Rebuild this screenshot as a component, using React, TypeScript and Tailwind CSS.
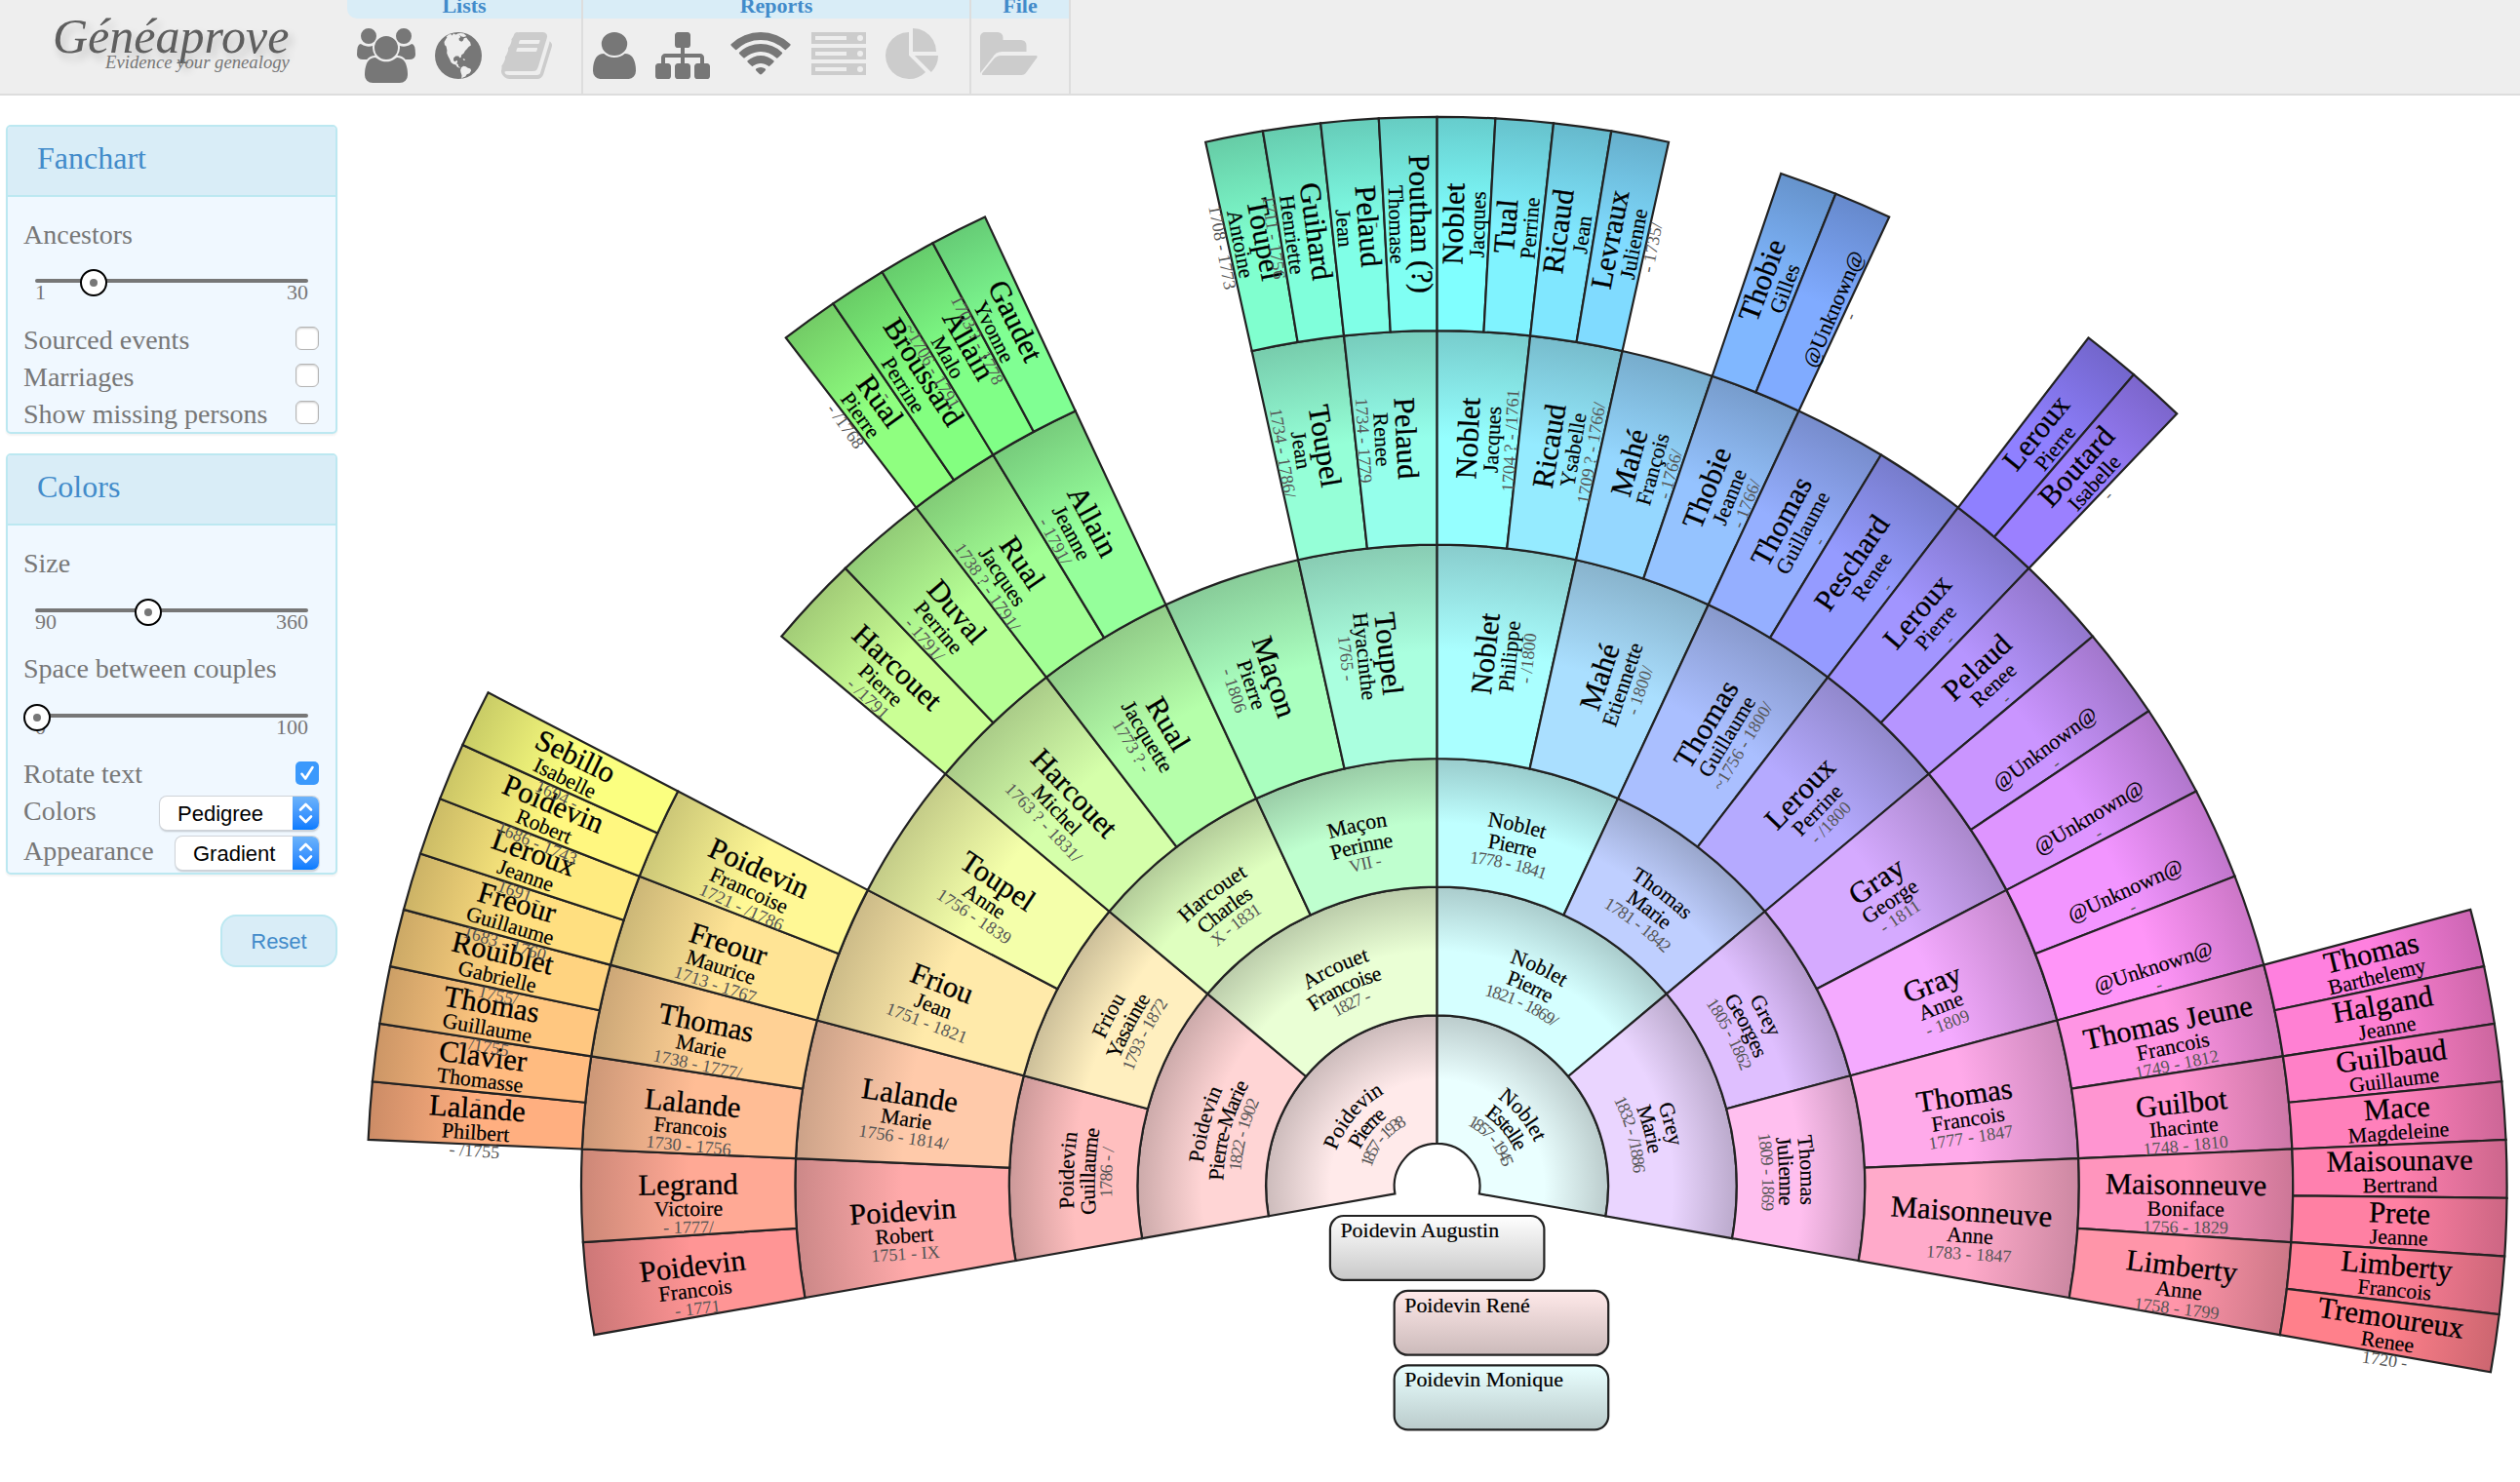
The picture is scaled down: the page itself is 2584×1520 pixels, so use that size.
import React from "react";

/* ------------------------------------------------------------------ */
/* Data: one array per generation, [surname, given name, dates]        */
/* ------------------------------------------------------------------ */

type Person = [string, string, string] | null;

const UNKNOWN: Person = ["", "@Unknown@", "-"];

const blanks = (n: number): Person[] => Array.from({ length: n }, () => null);

const GENERATIONS: Person[][] = [
  [
    ["Poidevin", "Pierre", "1857 - 1938"],
    ["Noblet", "Estelle", "1857 - 1945"],
  ],
  [
    ["Poidevin", "Pierre-Marie", "1822 - 1902"],
    ["Arcouet", "Francoise", "1827 -"],
    ["Noblet", "Pierre", "1821 - 1869/"],
    ["Grey", "Marie", "1832 - /1886"],
  ],
  [
    ["Poidevin", "Guillaume", "1786 - /"],
    ["Friou", "Yasainte", "1793 - 1872"],
    ["Harcouet", "Charles", "X - 1831"],
    ["Maçon", "Perinne", "VII -"],
    ["Noblet", "Pierre", "1778 - 1841"],
    ["Thomas", "Marie", "1781 - 1842"],
    ["Grey", "Georges", "1805 - 1862"],
    ["Thomas", "Julienne", "1809 - 1869"],
  ],
  [
    ["Poidevin", "Robert", "1751 - IX"],
    ["Lalande", "Marie", "1756 - 1814/"],
    ["Friou", "Jean", "1751 - 1821"],
    ["Toupel", "Anne", "1756 - 1839"],
    ["Harcouet", "Michel", "1763 ? - 1831/"],
    ["Rual", "Jacquette", "1773 ? -"],
    ["Maçon", "Pierre", "- 1806"],
    ["Toupel", "Hyacinthe", "1765 -"],
    ["Noblet", "Philippe", "- /1800"],
    ["Mahé", "Etiennette", "- 1800/"],
    ["Thomas", "Guillaume", "~1756 - 1800/"],
    ["Leroux", "Perrine", "- /1800"],
    ["Gray", "George", "- 1811"],
    ["Gray", "Anne", "- 1809"],
    ["Thomas", "Francois", "1777 - 1847"],
    ["Maisonneuve", "Anne", "1783 - 1847"],
  ],
  [
    ["Poidevin", "Francois", "- 1771"],
    ["Legrand", "Victoire", "- 1777/"],
    ["Lalande", "Francois", "1730 - 1756"],
    ["Thomas", "Marie", "1738 - 1777/"],
    ["Freour", "Maurice", "1713 - 1767"],
    ["Poidevin", "Francoise", "1721 - /1786"],
    ...blanks(2),
    ["Harcouet", "Pierre", "- /1791"],
    ["Duval", "Perrine", "- 1791/"],
    ["Rual", "Jacques", "1738 ? - 1791/"],
    ["Allain", "Jeanne", "- 1791/"],
    ...blanks(2),
    ["Toupel", "Jean", "1734 - 1786/"],
    ["Pelaud", "Renee", "1734 - 1779"],
    ["Noblet", "Jacques", "1704 ? - /1761"],
    ["Ricaud", "Ysabelle", "1709 ? - 1766/"],
    ["Mahé", "François", "- 1766/"],
    ["Thobie", "Jeanne", "- 1766/"],
    ["Thomas", "Guillaume", "-"],
    ["Peschard", "Renee", "-"],
    ["Leroux", "Pierre", "-"],
    ["Pelaud", "Renee", "-"],
    UNKNOWN,
    UNKNOWN,
    UNKNOWN,
    UNKNOWN,
    ["Thomas Jeune", "Francois", "1749 - 1812"],
    ["Guilbot", "Ihacinte", "1748 - 1810"],
    ["Maisonneuve", "Boniface", "1756 - 1829"],
    ["Limberty", "Anne", "1758 - 1799"],
  ],
  [
    ...blanks(4),
    ["Lalande", "Philbert", "- /1755"],
    ["Clavier", "Thomasse", "-"],
    ["Thomas", "Guillaume", "- /1755"],
    ["Rouiblet", "Gabrielle", "- 1755/"],
    ["Freour", "Guillaume", "1683 - 1760"],
    ["Leroux", "Jeanne", "1691 -"],
    ["Poidevin", "Robert", "1686 - 1743"],
    ["Sebillo", "Isabelle", "1694 -"],
    ...blanks(8),
    ["Rual", "Pierre", "- /1768"],
    ["Broussard", "Perrine", "-"],
    ["Allain", "Malo", "~1706 - 1791"],
    ["Gaudet", "Yvonne", "1703 ? - 1778"],
    ...blanks(4),
    ["Toupel", "Antoine", "1708 - 1773"],
    ["Guihard", "Henriette", "1711 - 1756"],
    ["Pelaud", "Jean", ""],
    ["Pouthan (?)", "Thomase", "-"],
    ["Noblet", "Jacques", ""],
    ["Tual", "Perrine", ""],
    ["Ricaud", "Jean", ""],
    ["Levraux", "Julienne", "- 1735/"],
    ...blanks(2),
    ["Thobie", "Gilles", ""],
    UNKNOWN,
    ...blanks(4),
    ["Leroux", "Pierre", ""],
    ["Boutard", "Isabelle", "-"],
    ...blanks(10),
    ["Thomas", "Barthelemy", ""],
    ["Halgand", "Jeanne", ""],
    ["Guilbaud", "Guillaume", ""],
    ["Mace", "Magdeleine", ""],
    ["Maisounave", "Bertrand", ""],
    ["Prete", "Jeanne", ""],
    ["Limberty", "Francois", ""],
    ["Tremoureux", "Renee", "1720 -"],
  ],
];

/* ------------------------------------------------------------------ */
/* Chart geometry                                                      */
/* ------------------------------------------------------------------ */

const CX = 1473.6;
const CY = 1216.8;
const UNIT = 2.194;
const RADII = [20, 80, 140, 200, 300, 400, 500].map((r) => r * UNIT);
const SPREAD = 200;
const LINE_1 = 10 * UNIT;
const LINE_2 = 18 * UNIT;

/** Point at radius r and an angle in degrees, clockwise from the top. */
const at = (r: number, deg: number) => {
  const a = (deg * Math.PI) / 180;
  return [CX + r * Math.sin(a), CY - r * Math.cos(a)];
};

const fmt = (p: number[]) => p.map((v) => v.toFixed(2)).join(" ");

/** Full-value HSV colour scaled by k. */
const colour = (hue: number, sat: number, k: number) => {
  const ch = (n: number) => {
    const h = (n + hue / 60) % 6;
    return Math.round(255 * k * (1 - sat * Math.max(0, Math.min(h, 4 - h, 1))));
  };
  return `rgb(${ch(5)},${ch(3)},${ch(1)})`;
};

interface Cell {
  id: string;
  gen: number;
  person: [string, string, string];
  a0: number;
  a1: number;
  r0: number;
  r1: number;
  hue: number;
}

const CELLS: Cell[] = GENERATIONS.flatMap((people, gen) => {
  const step = SPREAD / people.length;
  return people.flatMap((person, i) =>
    person
      ? [
          {
            id: `c${gen}-${i}`,
            gen,
            person,
            a0: -SPREAD / 2 + i * step,
            a1: -SPREAD / 2 + (i + 1) * step,
            r0: RADII[gen],
            r1: RADII[gen + 1],
            hue: (360 * i) / people.length,
          },
        ]
      : [],
  );
});

function CellShape({ c }: { c: Cell }) {
  const sat = (c.gen + 1) / 12;
  const mid = (c.r0 + c.r1) / 2 / c.r1;
  return (
    <>
      <radialGradient id={`g${c.id}`} gradientUnits="userSpaceOnUse" cx={CX} cy={CY} r={c.r1}>
        <stop offset={mid} stopColor={colour(c.hue, sat, 1)} />
        <stop offset={1} stopColor={colour(c.hue, sat, 0.8)} />
      </radialGradient>
      <path
        d={`M${fmt(at(c.r0, c.a0))} L${fmt(at(c.r1, c.a0))} A${c.r1} ${c.r1} 0 0 1 ${fmt(at(c.r1, c.a1))} L${fmt(at(c.r0, c.a1))} A${c.r0} ${c.r0} 0 0 0 ${fmt(at(c.r0, c.a0))} Z`}
        fill={`url(#g${c.id})`}
        className="stroke-[#222] stroke-[2.2px]"
      />
    </>
  );
}

function CellText({ c }: { c: Cell }) {
  const [surname, given, dates] = c.person;
  const r = (c.r0 + c.r1) / 2;
  if (c.gen < 3) {
    const rows: [string, number, string][] = [
      [surname, 0, "stroke-black stroke-[0.2px] text-[21.95px]"],
      [given, LINE_1, "stroke-black stroke-[0.2px] text-[21.95px]"],
      [dates, LINE_2, "fill-[#555] text-[18.1px]"],
    ];
    return (
      <>
        <path id={`t${c.id}`} d={`M${fmt(at(r, c.a0))} A${r} ${r} 0 0 1 ${fmt(at(r, c.a1))}`} fill="none" />
        {rows.map(([value, dy, cls]) => (
          <text key={dy} className={cls} textAnchor="middle">
            <textPath href={`#t${c.id}`} startOffset="50%">
              <tspan dy={dy}>{value}</tspan>
            </textPath>
          </text>
        ))}
      </>
    );
  }
  const mid = (c.a0 + c.a1) / 2;
  const [x, y] = at(r, mid);
  return (
    <g transform={`translate(${x} ${y}) rotate(${mid < 0 ? mid + 90 : mid - 90})`} textAnchor="middle">
      <text className="stroke-black stroke-[0.3px] text-[30.73px]">{surname}</text>
      <text y={LINE_1} className="stroke-black stroke-[0.2px] text-[21.95px]">{given}</text>
      <text y={LINE_2} className="fill-[#555] text-[18.1px]">{dates}</text>
    </g>
  );
}

const BOXES = [
  { name: "Poidevin Augustin", x: 1363.9, y: 1247, from: "#ffffff", to: "#c8c8c8" },
  { name: "Poidevin René", x: 1429.7, y: 1323.8, from: "#ffe9e9", to: "#cbbaba" },
  { name: "Poidevin Monique", x: 1429.7, y: 1400.4, from: "#e9ffff", to: "#bacbcb" },
];

function FanChart() {
  return (
    <svg
      className="block h-[1422px] w-[2224px] shrink-0 font-['Liberation_Serif',serif]"
      viewBox="360 98 2224 1422"
    >
      {CELLS.map((c) => (
        <CellShape key={c.id} c={c} />
      ))}
      {CELLS.map((c) => (
        <CellText key={c.id} c={c} />
      ))}
      {BOXES.map((b, i) => (
        <g key={b.name}>
          <linearGradient id={`box${i}`} x1="0" y1="0" x2="0" y2="1">
            <stop offset="0" stopColor={b.from} />
            <stop offset="1" stopColor={b.to} />
          </linearGradient>
          <rect
            x={b.x}
            y={b.y}
            width={219.5}
            height={65.9}
            rx={14}
            fill={`url(#box${i})`}
            className="stroke-[#222] stroke-[2.2px]"
          />
          <text x={b.x + 10.5} y={b.y + 22} className="stroke-black stroke-[0.2px] text-[21.95px]">
            {b.name}
          </text>
        </g>
      ))}
    </svg>
  );
}

/* ------------------------------------------------------------------ */
/* Header                                                              */
/* ------------------------------------------------------------------ */

const USERS =
  "M593 896q-162 5-265 128h-134q-82 0-138-40.5t-56-118.5q0-353 124-353 6 0 43.5 21t97.5 42.5 119 21.5q67 0 133-23-5 37-5 66 0 139 81 256zm1071 637q0 120-73 189.5t-194 69.5h-874q-121 0-194-69.5t-73-189.5q0-53 3.5-103.5t14-109 26.5-108.5 43-97.5 62-81 85.5-53.5 111.5-20q10 0 43 21.5t73 48 107 48 135 21.5 135-21.5 107-48 73-48 43-21.5q61 0 111.5 20t85.5 53.5 62 81 43 97.5 26.5 108.5 14 109 3.5 103.5zm-1024-1277q0 106-75 181t-181 75-181-75-75-181 75-181 181-75 181 75 75 181zm704 384q0 159-112.5 271.5t-271.5 112.5-271.5-112.5-112.5-271.5 112.5-271.5 271.5-112.5 271.5 112.5 112.5 271.5zm576 225q0 78-56 118.5t-138 40.5h-134q-103-123-265-128 81-117 81-256 0-29-5-66 66 23 133 23 59 0 119-21.5t97.5-42.5 43.5-21q124 0 124 353zm-128-609q0 106-75 181t-181 75-181-75-75-181 75-181 181-75 181 75 75 181z";
const BOOK =
  "M1703 478q40 57 18 129l-275 906q-19 64-76.5 107.5t-122.5 43.5h-923q-77 0-148.5-53.5t-99.5-131.5q-24-67-2-127 0-4 3-27t4-37q1-8-3-21.5t-3-19.5q2-11 8-21t16.5-23.5 16.5-23.5q23-38 45-91.5t30-91.5q3-10 .5-30t-.5-28q3-11 17-28t17-23q21-36 42-92t25-90q1-9-2.5-32t.5-28q4-13 22-30.5t22-22.5q19-26 42.5-84.5t27.5-96.5q1-8-3-25.5t-2-26.5q2-8 9-18t18-23 17-21q8-12 16.5-30.5t15-35 16-36 19.5-32 26.5-23.5 36-11.5 47.5 5.5l-1 3q38-9 51-9h761q74 0 114 56t18 130l-274 906q-36 119-71.5 153.5t-128.5 34.5h-869q-27 0-38 15-11 16-1 43 24 70 144 70h923q29 0 56-15.5t35-41.5l300-987q7-22 5-57 38 15 59 43zm-1064 2q-4 13 2 22.5t20 9.5h608q13 0 25.5-9.5t16.5-22.5l21-64q4-13-2-22.5t-20-9.5h-608q-13 0-25.5 9.5t-16.5 22.5zm-83 256q-4 13 2 22.5t20 9.5h608q13 0 25.5-9.5t16.5-22.5l21-64q4-13-2-22.5t-20-9.5h-608q-13 0-25.5 9.5t-16.5 22.5z";
const USER =
  "M1536 1399q0 109-62.5 187t-150.5 78h-854q-88 0-150.5-78t-62.5-187q0-85 8.5-160.5t31.5-152 58.5-131 94-89 134.5-34.5q131 128 313 128t313-128q76 0 134.5 34.5t94 89 58.5 131 31.5 152 8.5 160.5zm-256-887q0 159-112.5 271.5t-271.5 112.5-271.5-112.5-112.5-271.5 112.5-271.5 271.5-112.5 271.5 112.5 112.5 271.5z";
const SITEMAP =
  "M1792 1248v320q0 40-28 68t-68 28h-320q-40 0-68-28t-28-68v-320q0-40 28-68t68-28h96v-192h-512v192h96q40 0 68 28t28 68v320q0 40-28 68t-68 28h-320q-40 0-68-28t-28-68v-320q0-40 28-68t68-28h96v-192h-512v192h96q40 0 68 28t28 68v320q0 40-28 68t-68 28h-320q-40 0-68-28t-28-68v-320q0-40 28-68t68-28h96v-192q0-52 38-90t90-38h512v-192h-96q-40 0-68-28t-28-68v-320q0-40 28-68t68-28h320q40 0 68 28t28 68v320q0 40-28 68t-68 28h-96v192h512q52 0 90 38t38 90v192h96q40 0 68 28t28 68z";
const WIFI =
  "M1024 1523q-20 0-93-73.5t-73-93.5q0-32 62.5-54t103.5-22 103.5 22 62.5 54q0 20-73 93.5t-93 73.5zm270-271q-2 0-40-25t-101.5-50-128.5-25-128.5 25-101 50-40.5 25q-18 0-93.5-75t-75.5-93q0-13 10-23 78-77 196-121t233-44 233 44 196 121q10 10 10 23 0 18-75.5 93t-93.5 75zm273-272q-11 0-23-8-136-105-252-154.5t-268-49.5q-85 0-170.5 22t-149 53-113.5 62-79 53-31 22q-17 0-92-75t-75-93q0-12 10-22 132-132 320-205t380-73 380 73 320 205q10 10 10 22 0 18-75 93t-92 75zm271-271q-11 0-22-9-179-157-371.5-236.5t-420.5-79.5-420.5 79.5-371.5 236.5q-11 9-22 9-17 0-92.5-75t-75.5-93q0-13 10-23 187-186 445-288t527-102 527 102 445 288q10 10 10 23 0 18-75.5 93t-92.5 75z";
const PIE =
  "M768 890l546 546q-106 108-247.5 168t-298.5 60q-209 0-385.5-103t-279.5-279.5-103-385.5 103-385.5 279.5-279.5 385.5-103v762zm187 6h773q0 157-60 298.5t-168 247.5zm709-128h-768v-768q209 0 385.5 103t279.5 279.5 103 385.5z";

const on = "block h-14 fill-[#777]";
const off = "block h-14 fill-[#ccc]";

function GlobeIcon() {
  return (
    <svg className="ml-5 block h-14 w-12 fill-[#777]" viewBox="0 0 48 56">
      <circle cx="24" cy="28" r="24" />
      <g className="fill-[#eee]">
        <path d="M11.4 9 14 6.6 16.3 6l1.4 1.4 1.2-2.2 2.2 1.2 2.4-.7 1.6 1 1.2 2.2-1.8 1.5.4 2.2 2.4 1.1 1.6-1.2.9-2.3 2.4-.7 1.6 2.2 2.3 2.5.8 3.4-2.3 1.5-1.8 2.2-1.8 1.6-1.5 2.8-2.4 1.8-.4 2.4-1.5.3-1-1.7-2.8.1-2.2 1.6-.2 2.7 1.4 1.4 2.1-1.5.7 1.8-1 1.7 1.6.6.4 2.4 1.7.6-.6.8-2.4-.9-1.5-2.3-2.6-.7-2.3-1.9-1.5-3.4-1.6-3-1.2-2.9.2-3.2-.9-4-1.6-1.5-.4-3 1.5-2.4 1.5-2.5z" />
        <path d="M23 5.5l3.5-.6 3.2.7 2.6 2.3-2.5 1.2-2.5-.7-2-1.4-2-.2z" />
        <path d="M27 40.3l2.2-1.6 2.5.5 1.7 1.4 3 .8.7 2-1.7 2.8-2.7 1-1.5 2.2-2.4 1.2-1.6 1.2.3-3.6-.9-2.6-.5-2.6z" />
        <path d="M28.6 31.2l1.8.3.5 1.6-1.6-.3z" />
      </g>
    </svg>
  );
}

function ServerIcon() {
  return (
    <svg className="ml-5 block h-14 w-14 fill-[#ccc]" viewBox="0 0 56 56">
      {[4, 20, 36].map((y) => (
        <g key={y}>
          <rect x="0" y={y} width="56" height="12" />
          <rect x="4" y={y + 4} width="32" height="4" className="fill-[#eee]" />
          <circle cx="50" cy={y + 6} r="3" className="fill-[#eee]" />
        </g>
      ))}
    </svg>
  );
}

function FolderIcon() {
  return (
    <svg className="ml-[9px] block h-14 w-[59px] fill-[#ccc]" viewBox="0 0 59 56">
      <path d="M0 46V9a5 5 0 0 1 5-5h13a5.5 5.5 0 0 1 5.5 5.5V12H42a5.5 5.5 0 0 1 5.5 5.5V24H22.5a11 11 0 0 0-9.8 6Z" />
      <path d="M21 28h36.5q1.8.3.7 2.2L46.8 46q-1.6 2-4.3 2H3q-1.8-.4-.7-2.3L14 31.5Q17 28 21 28Z" />
    </svg>
  );
}

function ToolGroup({ title, first, className, children }: { title: string; first?: boolean; className: string; children: React.ReactNode }) {
  return (
    <div className={`flex h-full flex-col border-r-2 border-[#ddd] ${className}`}>
      <div
        className={`h-[19px] w-full bg-[#d9edf7] text-center text-[22px] leading-[11px] font-bold text-[#428bca] ${first ? "rounded-bl-[10px]" : ""}`}
      >
        {title}
      </div>
      <div className="mt-[9.7px] flex">{children}</div>
    </div>
  );
}

function Header() {
  return (
    <header className="flex h-[98px] border-b-2 border-[#ddd] bg-[#eee]">
      <div className="w-[356px] pt-[10px] pl-[54px] italic">
        <div className="text-[50px] leading-[55px] whitespace-nowrap text-[#5e5e5e] [text-shadow:4px_6px_10px_rgba(0,0,0,0.2)]">
          Généaprove
        </div>
        <div className="-mt-[11px] pl-[54px] text-[18.7px] leading-[20px] whitespace-nowrap text-[#777]">
          Evidence your genealogy
        </div>
      </div>
      <ToolGroup title="Lists" first className="w-[242px]">
        <svg className={`${on} ml-[10px] w-[60px]`} viewBox="0 0 1920 1792"><path d={USERS} /></svg>
        <GlobeIcon />
        <svg className={`${off} ml-[20px] w-[52px]`} viewBox="64 0 1664 1792"><path d={BOOK} /></svg>
      </ToolGroup>
      <ToolGroup title="Reports" className="w-[398px]">
        <svg className={`${on} ml-[10px] w-[44px]`} viewBox="256 0 1280 1792" preserveAspectRatio="none"><path d={USER} /></svg>
        <svg className={`${on} ml-[20px] w-[56px]`} viewBox="0 0 1792 1792"><path d={SITEMAP} /></svg>
        <svg className={`${on} ml-[20px] w-[64px]`} viewBox="0 0 2048 1792"><path d={WIFI} /></svg>
        <ServerIcon />
        <svg className={`${off} ml-[20px] w-[54px]`} viewBox="0 0 1728 1792"><path d={PIE} /></svg>
      </ToolGroup>
      <ToolGroup title="File" className="w-[102px]">
        <FolderIcon />
      </ToolGroup>
    </header>
  );
}

/* ------------------------------------------------------------------ */
/* Sidebar                                                             */
/* ------------------------------------------------------------------ */

function Panel({ title, className, children }: { title: string; className: string; children: React.ReactNode }) {
  return (
    <section
      className={`w-[340px] overflow-hidden rounded-[5px] border-2 border-[#bce8f1] bg-[#f0f8ff] shadow-[0_2px_2px_rgba(0,0,0,0.05)] ${className}`}
    >
      <h2 className="h-[72px] border-b-2 border-[#bce8f1] bg-[#d9edf7] pl-[30px] text-[32px] leading-[64px] text-[#428bca]">
        {title}
      </h2>
      <div className="pt-5 pr-[17px] pl-4 text-[28px] leading-[38px] text-[#777]">{children}</div>
    </section>
  );
}

function Slider({ label, min, max, pos, className }: { label: string; min: number; max: number; pos: number; className: string }) {
  return (
    <div>
      <div>{label}</div>
      <div className={`h-[70px] pr-[11px] pl-3 ${className}`}>
        <div className="relative h-1 rounded-full bg-[#777]">
          <div
            className="absolute -top-[10px] flex size-7 -translate-x-1/2 items-center justify-center rounded-full border-2 border-black bg-white"
            style={{ left: pos }}
          >
            <div className="size-2 rounded-full bg-[#777]" />
          </div>
        </div>
        <div className="flex justify-between text-[22px] leading-[19px]">
          <span>{min}</span>
          <span>{max}</span>
        </div>
      </div>
    </div>
  );
}

function Check({ label, checked }: { label: string; checked?: boolean }) {
  return (
    <div className="flex h-[38px] justify-between">
      <span>{label}</span>
      {checked ? (
        <span className="mt-[6px] flex size-6 items-center justify-center rounded-[5px] bg-[#3b99fc]">
          <svg viewBox="0 0 24 24" className="size-6 fill-none stroke-white stroke-[2.6px]">
            <path d="M6.5 12.8 10.2 17.5 17.5 6" strokeLinecap="round" strokeLinejoin="round" />
          </svg>
        </span>
      ) : (
        <span className="mt-[5px] size-6 rounded-[6px] border border-[#b4b4b4] bg-white shadow-[inset_0_1px_2px_rgba(0,0,0,0.2)]" />
      )}
    </div>
  );
}

function Select({ label, value, className }: { label: string; value: string; className: string }) {
  return (
    <div className="flex h-[41px] justify-between">
      <span>{label}</span>
      <span
        className={`mt-1 flex h-[34px] overflow-hidden rounded-[7px] bg-white font-['Liberation_Sans',Arial,sans-serif] text-[22px] leading-[36px] text-black shadow-[0_0_0_1px_#cfd3d8,0_2px_2px_rgba(0,0,0,0.2)] ${className}`}
      >
        <span className="flex-1 pl-[18px]">{value}</span>
        <span className="flex w-[27px] items-center justify-center bg-linear-to-b from-[#6cb3fa] to-[#067bff]">
          <svg viewBox="0 0 27 34" className="h-[34px] w-[27px] fill-none stroke-white stroke-[2.6px]">
            <path d="M8 13.5 13.5 8 19 13.5M8 20.5 13.5 26 19 20.5" strokeLinecap="round" strokeLinejoin="round" />
          </svg>
        </span>
      </span>
    </div>
  );
}

function Sidebar() {
  return (
    <aside className="flex w-[360px] shrink-0 flex-col pt-[30px] pl-[6px]">
      <Panel title="Fanchart" className="h-[317px]">
        <Slider label="Ancestors" min={1} max={30} pos={60} className="pt-[26px]" />
        <Check label="Sourced events" />
        <Check label="Marriages" />
        <Check label="Show missing persons" />
      </Panel>
      <Panel title="Colors" className="mt-5 h-[432px]">
        <Slider label="Size" min={90} max={360} pos={116} className="pt-[27px]" />
        <Slider label="Space between couples" min={0} max={100} pos={2} className="pt-[27px]" />
        <Check label="Rotate text" checked />
        <Select label="Colors" value="Pedigree" className="w-[163px]" />
        <Select label="Appearance" value="Gradient" className="w-[147px]" />
      </Panel>
      <button className="mt-[41px] ml-[220px] h-[54px] w-[120px] rounded-[16px] border-2 border-[#bce8f1] bg-[#d9edf7] font-['Liberation_Sans',Arial,sans-serif] text-[22px] text-[#428bca]">
        Reset
      </button>
    </aside>
  );
}

export default function App() {
  return (
    <div className="flex h-[1520px] w-[2584px] flex-col overflow-hidden bg-white font-['Liberation_Serif',serif]">
      <Header />
      <main className="flex">
        <Sidebar />
        <FanChart />
      </main>
    </div>
  );
}
